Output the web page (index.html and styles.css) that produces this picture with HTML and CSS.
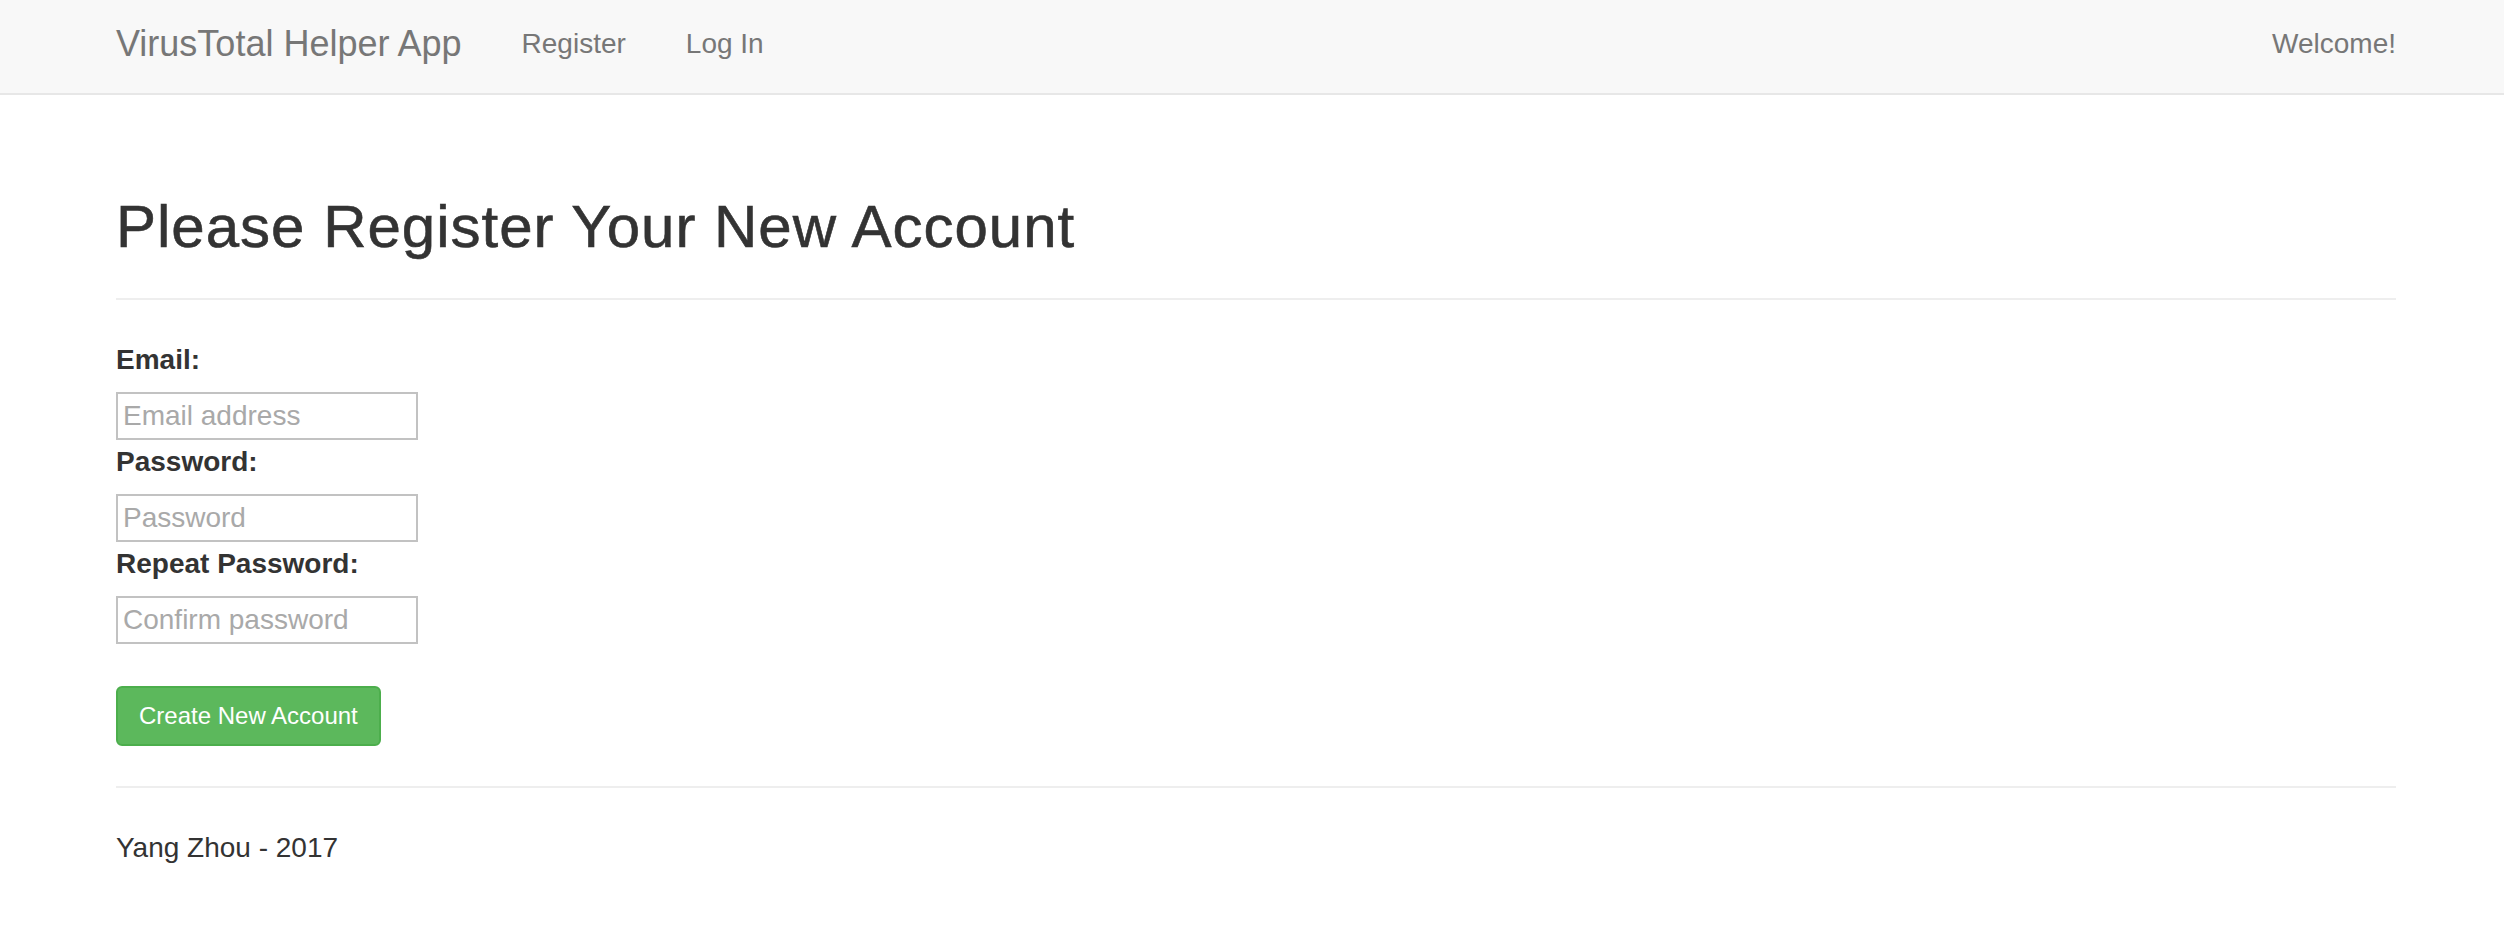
FILE: index.html
```html
<!DOCTYPE html>
<html lang="en">
<head>
<meta charset="utf-8">
<title>VirusTotal Helper App</title>
<link rel="stylesheet" href="styles.css">
</head>
<body>
<nav class="navbar">
  <div class="container nav-inner">
    <a class="brand" href="#">VirusTotal Helper App</a>
    <a class="nav-link" href="#">Register</a>
    <a class="nav-link" href="#">Log In</a>
    <span class="nav-right">Welcome!</span>
  </div>
</nav>
<main class="container">
  <div class="page-header">
    <h1>Please Register Your New Account</h1>
  </div>
  <form class="form">
    <label class="label" for="email">Email:</label>
    <input class="input" id="email" type="text" placeholder="Email address">
    <label class="label" for="pw">Password:</label>
    <input class="input" id="pw" type="password" placeholder="Password">
    <label class="label" for="pw2">Repeat Password:</label>
    <input class="input" id="pw2" type="password" placeholder="Confirm password">
    <div class="actions">
      <button class="btn" type="button">Create New Account</button>
    </div>
  </form>
  <hr class="rule">
  <footer class="footer">Yang Zhou - 2017</footer>
</main>
</body>
</html>
```

FILE: styles.css
```css
html, body {
  margin: 0;
  padding: 0;
  background: #ffffff;
}
body {
  font-family: "Liberation Sans", Arial, Helvetica, sans-serif;
  color: #333333;
  font-size: 28px;
  line-height: 40px;
}
.container {
  margin: 0 108px 0 116px;
}
.navbar {
  box-sizing: border-box;
  background: #f8f8f8;
  border-bottom: 2px solid #e7e7e7;
  height: 95px;
}
.nav-inner {
  display: flex;
  align-items: flex-start;
  padding-top: 24px;
}
.brand {
  font-size: 36px;
  line-height: 40px;
  color: #777777;
  text-decoration: none;
  padding-right: 30px;
}
.nav-link {
  font-size: 28px;
  line-height: 40px;
  color: #777777;
  text-decoration: none;
  padding: 0 30px;
}
.nav-right {
  margin-left: auto;
  color: #777777;
  font-size: 28px;
  line-height: 40px;
}
.page-header {
  margin-top: 99px;
  padding-bottom: 18px;
  border-bottom: 2px solid #eeeeee;
  margin-bottom: 40px;
}
.page-header h1 {
  margin: 0 0 20px 0;
  font-size: 60px;
  line-height: 66px;
  font-weight: 500;
  letter-spacing: 1px;
  color: #333333;
  -webkit-text-stroke: 0.6px #333333;
}
.form {
  display: flex;
  flex-direction: column;
  align-items: flex-start;
}
.label {
  font-weight: bold;
  font-size: 28px;
  line-height: 40px;
  margin-bottom: 12px;
}
.input {
  box-sizing: border-box;
  width: 302px;
  height: 48px;
  border: 2px solid #c2c2c2;
  padding: 0 5px;
  margin: 0 0 2px 0;
  font-family: "Liberation Sans", Arial, Helvetica, sans-serif;
  font-size: 28px;
  color: #333333;
  background: #ffffff;
  outline: none;
}
.input::placeholder {
  color: #a9a9a9;
}
.actions {
  margin-top: 40px;
}
.btn {
  box-sizing: border-box;
  height: 60px;
  padding: 0 21px;
  background: #5cb85c;
  border: 2px solid #4cae4c;
  border-radius: 6px;
  color: #ffffff;
  font-family: "Liberation Sans", Arial, Helvetica, sans-serif;
  font-size: 24px;
  line-height: 36px;
}
.rule {
  margin: 40px 0 0 0;
  border: 0;
  border-top: 2px solid #eeeeee;
  height: 0;
}
.footer {
  margin-top: 40px;
  font-size: 28px;
  line-height: 40px;
}
```
